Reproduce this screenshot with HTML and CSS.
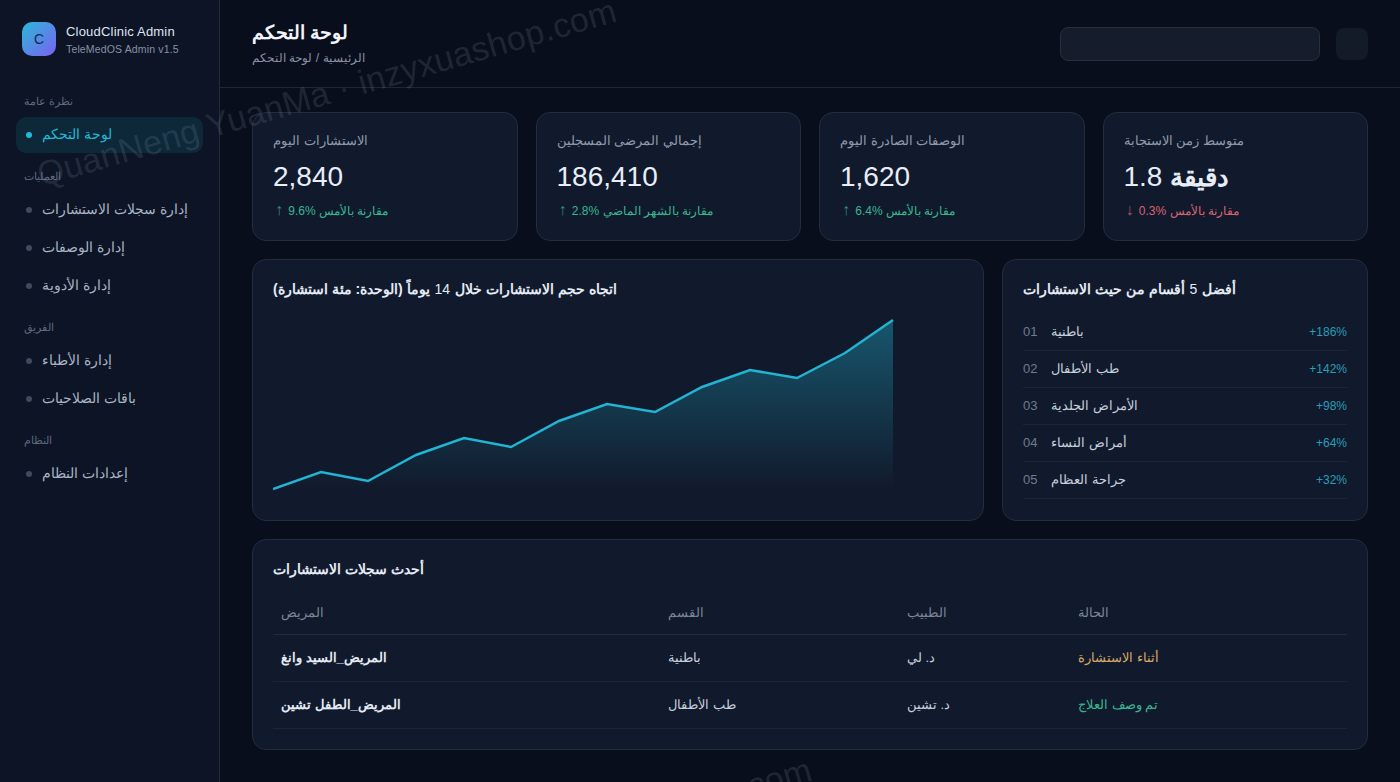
FILE: index.html
```html
<!DOCTYPE html>
<html lang="ar">
<head>
<meta charset="utf-8">
<title>CloudClinic Admin</title>
<link rel="stylesheet" href="styles.css">
</head>
<body>
<div class="app">
  <aside class="sidebar">
    <div class="brand">
      <div class="logo">C</div>
      <div class="brand-text">
        <div class="brand-name">CloudClinic Admin</div>
        <div class="brand-sub">TeleMedOS Admin v1.5</div>
      </div>
    </div>
    <div class="nav-label first">نظرة عامة</div>
    <a class="nav-item active"><i class="dot"></i>لوحة التحكم</a>
    <div class="nav-label">العمليات</div>
    <a class="nav-item"><i class="dot"></i>إدارة سجلات الاستشارات</a>
    <a class="nav-item"><i class="dot"></i>إدارة الوصفات</a>
    <a class="nav-item"><i class="dot"></i>إدارة الأدوية</a>
    <div class="nav-label">الفريق</div>
    <a class="nav-item"><i class="dot"></i>إدارة الأطباء</a>
    <a class="nav-item"><i class="dot"></i>باقات الصلاحيات</a>
    <div class="nav-label">النظام</div>
    <a class="nav-item"><i class="dot"></i>إعدادات النظام</a>
  </aside>
  <main class="main">
    <header class="topbar">
      <div class="heading">
        <h1 class="page-title">لوحة التحكم</h1>
        <div class="crumbs">الرئيسية / لوحة التحكم</div>
      </div>
      <div class="top-actions">
        <div class="search"></div>
        <div class="icon-btn"></div>
      </div>
    </header>
    <div class="content">
      <section class="stats">
        <div class="card stat">
          <div class="stat-label">الاستشارات اليوم</div>
          <div class="stat-value">2,840</div>
          <div class="stat-delta up"><span class="arrow">↑</span> 9.6% مقارنة بالأمس</div>
        </div>
        <div class="card stat">
          <div class="stat-label">إجمالي المرضى المسجلين</div>
          <div class="stat-value">186,410</div>
          <div class="stat-delta up"><span class="arrow">↑</span> 2.8% مقارنة بالشهر الماضي</div>
        </div>
        <div class="card stat">
          <div class="stat-label">الوصفات الصادرة اليوم</div>
          <div class="stat-value">1,620</div>
          <div class="stat-delta up"><span class="arrow">↑</span> 6.4% مقارنة بالأمس</div>
        </div>
        <div class="card stat">
          <div class="stat-label">متوسط زمن الاستجابة</div>
          <div class="stat-value">1.8 <b class="unit">دقيقة</b></div>
          <div class="stat-delta down"><span class="arrow">↓</span> 0.3% مقارنة بالأمس</div>
        </div>
      </section>
      <section class="mid">
        <div class="card chart-card">
          <h2 class="card-title">اتجاه حجم الاستشارات خلال <span class="plain">14</span> يوماً (الوحدة: مئة استشارة)</h2>
          <svg class="chart" viewBox="0 0 690 180" width="690" height="180" aria-hidden="true">
            <defs>
              <linearGradient id="fill" x1="0" y1="0" x2="0" y2="1">
                <stop offset="0" stop-color="#22b8d6" stop-opacity=".38"/>
                <stop offset="1" stop-color="#22b8d6" stop-opacity="0"/>
              </linearGradient>
            </defs>
            <path fill="url(#fill)" d="M0 171 48 154 95 163 143 137 191 120 238 129 286 103 334 86 382 94 429 69 477 52 524 60 572 35 620 2V171Z"/>
            <path fill="none" stroke="#22b4d2" stroke-width="2.5" d="M0 171 48 154 95 163 143 137 191 120 238 129 286 103 334 86 382 94 429 69 477 52 524 60 572 35 620 2"/>
          </svg>
        </div>
        <div class="card rank-card">
          <h2 class="card-title">أفضل <span class="plain">5</span> أقسام من حيث الاستشارات</h2>
          <ul class="rank">
            <li><span class="num">01</span><span class="dept">باطنية</span><span class="pct">+186%</span></li>
            <li><span class="num">02</span><span class="dept">طب الأطفال</span><span class="pct">+142%</span></li>
            <li><span class="num">03</span><span class="dept">الأمراض الجلدية</span><span class="pct">+98%</span></li>
            <li><span class="num">04</span><span class="dept">أمراض النساء</span><span class="pct">+64%</span></li>
            <li><span class="num">05</span><span class="dept">جراحة العظام</span><span class="pct">+32%</span></li>
          </ul>
        </div>
      </section>
      <section class="card table-card">
        <h2 class="card-title">أحدث سجلات الاستشارات</h2>
        <table class="records">
          <thead>
            <tr><th class="c1">المريض</th><th class="c2">القسم</th><th class="c3">الطبيب</th><th>الحالة</th></tr>
          </thead>
          <tbody>
            <tr><td class="patient">المريض_السيد وانغ</td><td>باطنية</td><td>د. لي</td><td class="amber">أثناء الاستشارة</td></tr>
            <tr><td class="patient">المريض_الطفل تشين</td><td>طب الأطفال</td><td>د. تشين</td><td class="green">تم وصف العلاج</td></tr>
          </tbody>
        </table>
      </section>
    </div>
  </main>
</div>
<div class="wm wm-a">QuanNeng YuanMa · inzyxuashop.com</div>
<div class="wm wm-b">inzyxuashop.com</div>
</body>
</html>
```
FILE: styles.css
```css
* { box-sizing: border-box; }
html, body { margin: 0; height: 100%; }
body {
  background: #090e1c;
  color: #e5ebf5;
  font-family: "Liberation Sans", sans-serif;
  overflow: hidden;
  position: relative;
}
.app { display: flex; height: 782px; }
.sidebar {
  width: 220px;
  flex: none;
  background: #0c1425;
  border-right: 1px solid #222b3c;
  padding: 22px 16px;
}
.brand { display: flex; align-items: center; gap: 10px; padding: 0 6px; margin-bottom: 36px; height: 35px; }
.logo {
  width: 34px; height: 34px; border-radius: 10px; align-self: flex-start;
  background: linear-gradient(135deg, #2bb8d8, #7b61f2);
  color: #0f2a4a; display: flex; align-items: center; justify-content: center;
  font-size: 14px; font-weight: 400;
}
.brand-text { padding-top: 1px; }
.brand-name { font-size: 13px; line-height: 18px; color: #dfe6f1; letter-spacing: .2px; }
.brand-sub { font-size: 10.5px; line-height: 16px; color: #8792a6; letter-spacing: .15px; }
.nav-label { font-size: 11px; line-height: 16px; color: #5f6a7e; padding: 0 8px; margin: 15px 0 8px; }
.nav-label.first { margin-top: 0; }
.nav-item {
  display: flex; align-items: center; gap: 10px;
  height: 36px; margin-bottom: 2px; padding: 0 10px 2px;
  border-radius: 10px; font-size: 14px; color: #a9b3c4;
}
.nav-item.active { background: #0d2839; color: #22b8d6; }
.dot { width: 6px; height: 6px; margin-top: 2px; border-radius: 50%; background: #3f4a5e; flex: none; }
.active .dot { background: #22b8d6; }
.main { flex: 1; min-width: 0; }
.topbar {
  height: 88px; padding: 0 32px;
  border-bottom: 1px solid #1f2737;
  display: flex; align-items: center; justify-content: space-between;
}
.heading { padding-bottom: 2px; }
.page-title { margin: 0 0 4px; font-size: 19.2px; line-height: 26px; font-weight: 600; color: #f1f5fb; }
.crumbs { font-size: 12.3px; line-height: 16px; color: #8792a6; }
.top-actions { display: flex; align-items: center; gap: 16px; }
.search { width: 260px; height: 34px; background: #151c2b; border: 1px solid #262e3f; border-radius: 8px; }
.icon-btn { width: 32px; height: 32px; background: #131a28; border-radius: 8px; }
.content { padding: 24px 32px; display: flex; flex-direction: column; gap: 18px; }
.card { background: #111a2c; border: 1px solid #232c3e; border-radius: 14px; padding: 20px; }
.stats { display: grid; grid-template-columns: repeat(4, 1fr); gap: 18px; }
.stat { height: 129px; }
.stat-label { font-size: 13px; line-height: 16px; color: #8f9aad; margin-bottom: 10px; }
.stat-value { font-size: 28px; line-height: 36px; color: #e8eef8; margin-bottom: 7px; font-weight: 400; }
.unit { font-weight: 600; font-size: 26.4px; }
.stat-delta { font-size: 12px; line-height: 16px; }
.up { color: #38b690; }
.down { color: #d9636f; }
.arrow { display: inline-block; padding: 0 2px; font-size: 16px; line-height: 16px; opacity: .75; }
.mid { display: grid; grid-template-columns: 2fr 1fr; gap: 18px; }
.chart-card, .rank-card { height: 262px; }
.card-title { margin: 0; font-size: 14px; line-height: 18px; font-weight: 600; color: #e5ebf5; }
.plain { font-weight: 400; padding: 0 1px; }
.chart { display: block; margin-top: 20px; }
.rank { list-style: none; margin: 16px 0 0; padding: 0; }
.rank li { display: flex; align-items: center; height: 37px; padding-bottom: 2px; border-bottom: 1px solid #1c2536; font-size: 13px; }
.num { width: 28px; color: #6f7b8f; }
.dept { flex: 1; color: #c6cfdc; }
.pct { color: #2a9db8; font-size: 12px; margin-top: 2px; }
.table-card { height: 211px; }
.records { width: 100%; border-collapse: collapse; margin-top: 9px; table-layout: fixed; font-size: 13px; }
.records th { height: 47px; padding: 5px 8px 0; text-align: left; font-weight: 400; color: #7b8698; border-bottom: 1px solid #232c3e; }
.records td { height: 47px; padding: 0 8px; color: #c6cfdc; border-bottom: 1px solid #1c2536; }
.c1 { width: 387px; } .c2 { width: 239px; } .c3 { width: 171px; }
.records .patient { font-weight: 600; color: #e5ebf5; }
.records .amber { color: #d6a866; }
.records .green { color: #38b690; }
.wm {
  position: absolute; font-size: 34px; letter-spacing: .3px; color: rgba(148, 163, 184, .18);
  white-space: nowrap; transform: rotate(-16deg); transform-origin: left center; pointer-events: none;
}
.wm-a { left: 38px; top: 156px; }
.wm-b { left: 554px; top: 823px; }
```
